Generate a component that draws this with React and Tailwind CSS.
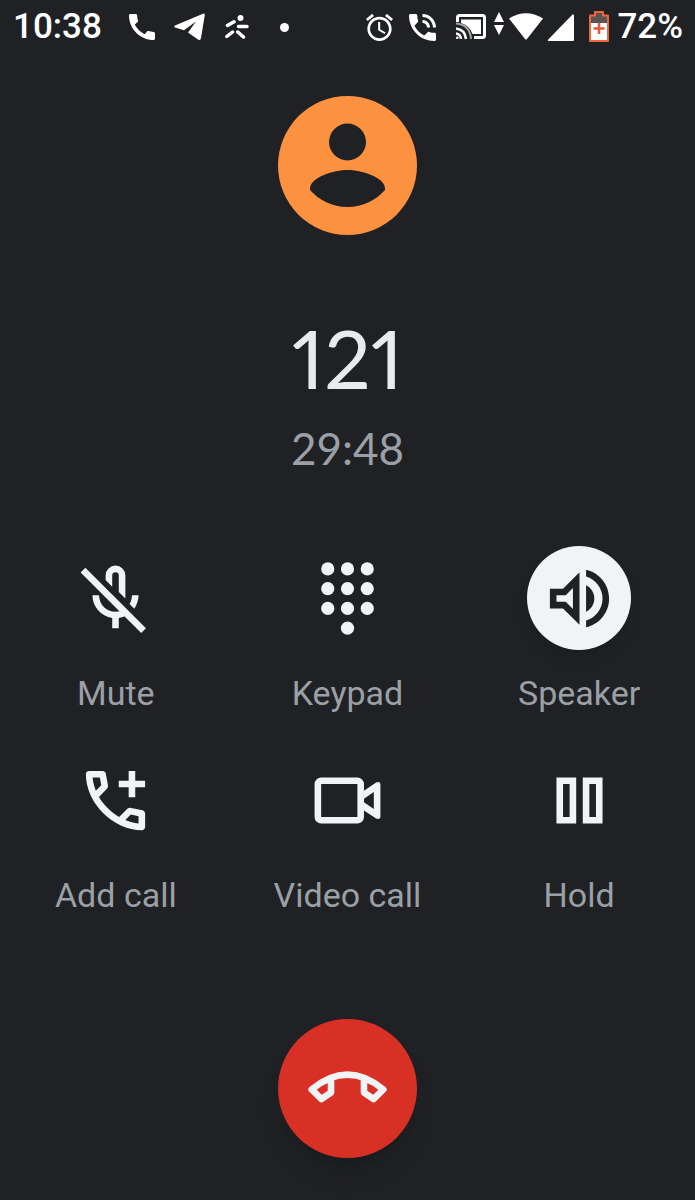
import React, { useState } from 'react';

const MicOffIcon = () => (
  <svg viewBox="0 0 24 24" fill="currentColor" className="w-[79px] h-[79px]">
    <path d="M9 6.4V5a3 3 0 0 1 6 0v7l-2-2V5a1 1 0 0 0-2 0v3.4z" />
    <path d="M17 11h2c0 1.5-.5 2.9-1.3 4.1l-1.45-1.45c.5-.8.75-1.7.75-2.65z" />
    <path d="M5 11h2c0 2.8 2.2 5 5 5 .6 0 1.2-.1 1.8-.3l1.6 1.5c-.7.35-1.6.6-2.4.72V21h-2v-3.08C7.6 17.4 5 14.5 5 11z" />
    <path d="M1.4 4.1l1.45-1.45 18.4 18.4-1.45 1.45z" />
  </svg>
);

const KeypadIcon = () => (
  <svg viewBox="0 0 24 24" fill="currentColor" className="w-[79px] h-[79px]">
    {[3, 9, 15].map((y) =>
      [6, 12, 18].map((x) => <circle key={`${x}-${y}`} cx={x} cy={y} r="2" />)
    )}
    <circle cx="12" cy="21" r="2" />
  </svg>
);

const SpeakerIcon = () => (
  <svg viewBox="0 0 24 24" fill="currentColor" className="w-[79px] h-[79px]">
    <path fillRule="evenodd" d="M3 9v6h4l5 5V4L7 9H3zm7-.17v6.34L7.83 13H5v-2h2.83L10 8.83z" />
    <path d="M16.5 12c0-1.77-1.02-3.29-2.5-4.03v8.05c1.48-.73 2.5-2.25 2.5-4.02z" />
    <path d="M14 3.23v2.06c2.89.86 5 3.54 5 6.71s-2.11 5.85-5 6.71v2.06c4.01-.91 7-4.49 7-8.77s-2.99-7.86-7-8.77z" />
  </svg>
);

const AddCallIcon = () => (
  <svg viewBox="0 0 24 24" fill="currentColor" className="w-[79px] h-[79px]">
    <path
      fillRule="evenodd"
      d="M19.95 21q-3.125 0-6.175-1.363T8.225 15.775 4.363 10.225 3 4.05q0-.45.3-.75t.75-.3H8.1q.35 0 .625.238t.325.562l.65 3.5q.05.4-.025.675T9.4 8.45L6.975 10.9q.5.925 1.187 1.787t1.513 1.663q.775.775 1.625 1.438T13.1 17l2.35-2.35q.225-.225.588-.338t.712-.062l3.45.7q.35.1.575.363T21 15.9v4.05q0 .45-.3.75t-.75.3zM6.025 9l1.65-1.65L7.25 5H5.025q.125 1.025.35 2.025T6.025 9zm8.95 8.95q.975.425 1.988.675T19 18.95v-2.2l-2.35-.475z"
    />
    <path d="M16 3h2v3h3v2h-3v3h-2V8h-3V6h3z" />
  </svg>
);

const VideoIcon = () => (
  <svg viewBox="0 0 24 24" fill="currentColor" className="w-[79px] h-[79px]">
    <path fillRule="evenodd" d="M4 5h11a2 2 0 0 1 2 2v10a2 2 0 0 1-2 2H4a2 2 0 0 1-2-2V7a2 2 0 0 1 2-2zm0 2v10h11V7z" />
    <path fillRule="evenodd" d="M17 9l3.7-2.5q1.3-.5 1.3.7v9.6q0 1.2-1.3.7L17 15zm0 2.5v1l3 2.1V9.4z" />
  </svg>
);

const HoldIcon = () => (
  <svg viewBox="0 0 24 24" fill="currentColor" className="w-[79px] h-[79px]">
    <path fillRule="evenodd" d="M5 5h6v14H5zm2 2v10h2V7zM13 5h6v14h-6zm2 2v10h2V7z" />
  </svg>
);

const EndCallIcon = () => (
  <svg
    viewBox="0 0 24 24"
    fill="none"
    stroke="currentColor"
    strokeWidth="2"
    strokeLinejoin="round"
    className="w-[79px] h-[79px]"
  >
    <path d="M7 8.6V13.200L4.100 15.200 1.100 12.300Q12 3.300 22.900 12.300L19.900 15.200 17 13.200V8.600" />
  </svg>
);

const StatusBar = () => (
  <header className="flex items-center justify-between h-[54px] pl-[13px] pr-3 text-white">
    <div className="flex items-center">
      <span className="text-[35px] leading-10 font-medium">10:38</span>
      <svg viewBox="3 3 18 18" fill="currentColor" className="w-[26px] h-[26px] ml-[27px]">
        <path d="M20.01 15.38c-1.23 0-2.42-.2-3.53-.56-.35-.12-.74-.03-1.01.24l-1.57 1.97c-2.83-1.35-5.48-3.9-6.89-6.83l1.95-1.66c.27-.28.35-.67.24-1.02-.37-1.11-.56-2.3-.56-3.53 0-.54-.45-.99-.99-.99H4.19C3.65 3 3 3.24 3 3.99 3 13.28 10.73 21 20.01 21c.71 0 .99-.63.99-1.18v-3.45c0-.54-.45-.99-.99-.99z" />
      </svg>
      <svg viewBox="0 0 31 28" fill="currentColor" className="w-[31px] h-7 ml-[19px]">
        <path d="M29 .8Q31 0 30.8 2L27 25Q26.5 28 24 26.500L14 19.500 22 8.500 10 17.200 1 14.500Q-.5 13.500 1 12.500z" />
      </svg>
      <svg
        viewBox="0 0 24 24"
        fill="none"
        stroke="currentColor"
        strokeWidth="3.5"
        strokeLinecap="round"
        className="w-6 h-6 ml-5"
      >
        <path d="M2.500 10.500L9 6.800M13.500 11.500H22M1.800 21.500L7.500 17M12.800 17L18.500 22" />
        <circle cx="15.500" cy="3" r="3" fill="currentColor" stroke="none" />
      </svg>
      <span className="w-[9px] h-[9px] ml-[31px] rounded-full bg-white" />
    </div>

    <div className="flex items-center">
      <svg viewBox="2 2 20 20" fill="currentColor" className="w-[27px] h-[27px]">
        <path d="M22 5.720l-4.600-3.860-1.290 1.530 4.600 3.860L22 5.720zM7.880 3.390L6.600 1.860 2 5.710l1.290 1.530 4.590-3.850zM12.500 8H11v6l4.750 2.850.75-1.230-4-2.370V8zM12 4c-4.970 0-9 4.030-9 9s4.020 9 9 9c4.970 0 9-4.030 9-9s-4.030-9-9-9zm0 16c-3.870 0-7-3.130-7-7s3.130-7 7-7 7 3.130 7 7-3.130 7-7 7z" />
      </svg>
      <svg viewBox="3 3 18 18" fill="currentColor" className="w-[27px] h-[27px] ml-4">
        <path d="M20 15.500c-1.250 0-2.450-.2-3.570-.57-.35-.11-.74-.03-1.020.24l-2.200 2.200c-2.830-1.440-5.150-3.750-6.590-6.590l2.200-2.200c.28-.28.36-.67.25-1.020C8.700 6.450 8.500 5.250 8.500 4c0-.55-.45-1-1-1H4c-.55 0-1 .45-1 1 0 9.390 7.610 17 17 17 .55 0 1-.45 1-1v-3.500c0-.55-.45-1-1-1zM19 12h2c0-4.970-4.030-9-9-9v2c3.870 0 7 3.130 7 7zM15 12h2c0-2.760-2.240-5-5-5v2c1.660 0 3 1.340 3 3z" />
      </svg>
      <svg viewBox="0 0 30 26" fill="none" stroke="currentColor" strokeWidth="3" className="w-[30px] h-[26px] ml-5">
        <path d="M1.500 8V3.500Q1.500 1.500 3.500 1.500H26.500Q28.500 1.500 28.500 3.500V21.500Q28.500 23.500 26.500 23.500H18" />
        <path d="M5 5.500H25V20H16.500Q14 12 5 9z" fill="currentColor" stroke="none" />
        <path d="M0 9.500Q14 10.500 15 25" stroke="#a5a6a7" strokeWidth="2" />
        <path d="M0 14.500Q9 15.500 10 25M0 19.500Q4.500 20 5 25" strokeWidth="2.500" />
        <circle cx="1.300" cy="23.700" r="1.300" fill="currentColor" stroke="none" />
      </svg>
      <svg viewBox="0 0 10 24" fill="currentColor" className="w-[10px] h-6 ml-2 mb-1.5">
        <path d="M5 0l5 10H0zM0 13h10L5 23z" />
      </svg>
      <svg viewBox="0 0 34 27" fill="currentColor" className="w-[34px] h-[27px] mb-0.5 ml-[5px]">
        <path d="M0 5.500Q17-5 34 5.500L18 26Q17 27 16 26z" />
      </svg>
      <svg viewBox="0 0 27 27" fill="currentColor" className="w-[27px] h-[27px] ml-1">
        <path d="M25.500.6Q27 0 27 1.500V26Q27 27 26 27H1.500Q0 27 1 25.700z" />
      </svg>
      <svg viewBox="0 0 20 31" className="w-5 h-[31px] ml-[15px] mb-0.5">
        <path d="M1 4.500H6V1H14V4.500H19V30H1z" fill="#5b5452" />
        <path d="M2 12H18V29H2z" fill="#fff" />
        <path d="M1 4.500H6V1H14V4.500H19V30H1z" fill="none" stroke="#f4653c" strokeWidth="2" strokeLinejoin="round" />
        <path d="M10 12V23M4.500 17.500H15.500" stroke="#e9573a" strokeWidth="2.500" />
      </svg>
      <span className="text-[35px] leading-10 font-medium ml-2">72%</span>
    </div>
  </header>
);

const actions = [
  { id: 'mute', label: 'Mute', Icon: MicOffIcon },
  { id: 'keypad', label: 'Keypad', Icon: KeypadIcon },
  { id: 'speaker', label: 'Speaker', Icon: SpeakerIcon },
  { id: 'add', label: 'Add call', Icon: AddCallIcon },
  { id: 'video', label: 'Video call', Icon: VideoIcon },
  { id: 'hold', label: 'Hold', Icon: HoldIcon },
];

const App = () => {
  const [active, setActive] = useState({ speaker: true });

  const toggle = (id) => {
    setActive((prev) => ({ ...prev, [id]: !prev[id] }));
  };

  return (
    <div className="min-h-screen flex flex-col bg-[#202124] font-['Roboto',sans-serif]">
      <StatusBar />

      <main className="flex-1 flex flex-col items-center pt-[42px] pb-[42px]">
        {/* Caller */}
        <svg viewBox="0 0 139 139" className="w-[139px] h-[139px]">
          <circle cx="69.5" cy="69.5" r="69.5" fill="#fc923f" />
          <circle cx="69.5" cy="46" r="18.5" fill="#202124" />
          <path d="M32 92C33 81 56 74 69.5 74S106 81 107 92V94C98 104 85 111 69.5 111S41 104 32 94z" fill="#202124" />
        </svg>
        <h1 className="mt-[72px] text-[82px] leading-[100px] font-['Lato',sans-serif] proportional-nums text-[#e8eaed]">
          121
        </h1>
        <p className="mt-[15px] text-[44px] leading-[52px] font-['Lato',sans-serif] text-[#9aa0a6]">29:48</p>

        {/* Call actions */}
        <div className="w-full grid grid-cols-3 gap-y-[35px] mt-[72px]">
          {actions.map(({ id, label, Icon }) => (
            <button
              key={id}
              type="button"
              aria-pressed={!!active[id]}
              onClick={() => toggle(id)}
              className="flex flex-col items-center gap-[23px]"
            >
              <span
                className={`w-[104px] h-[104px] rounded-full flex items-center justify-center ${
                  active[id] ? 'bg-[#f1f3f4] text-[#202124] shadow-lg' : 'text-[#f1f3f4]'
                }`}
              >
                <Icon />
              </span>
              <span className="text-[34px] leading-10 text-[#9aa0a6]">{label}</span>
            </button>
          ))}
        </div>

        <button
          type="button"
          aria-label="End call"
          className="mt-auto w-[139px] h-[139px] rounded-full flex items-center justify-center bg-[#d93025] text-[#f1f3f4] shadow-xl"
        >
          <EndCallIcon />
        </button>
      </main>
    </div>
  );
};

export default App;
